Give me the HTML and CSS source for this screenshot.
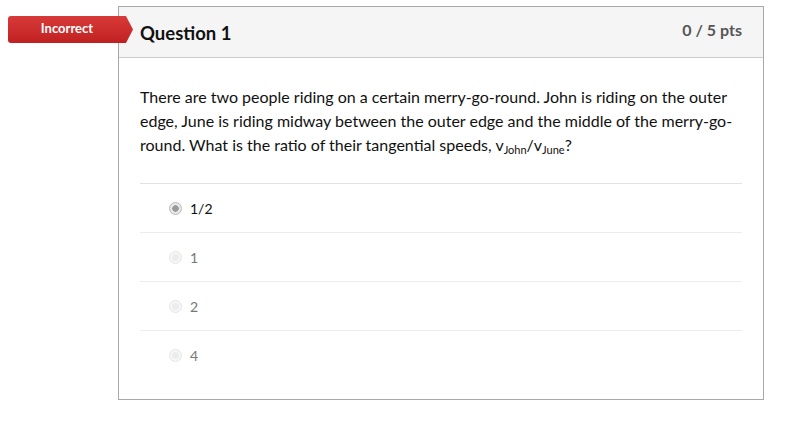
FILE: index.html
```html
<!DOCTYPE html>
<html>
<head>
<meta charset="utf-8">
<link rel="stylesheet" href="styles.css">
</head>
<body>
<div class="page">
  <div class="badge">Incorrect</div>
  <div class="card">
    <div class="header">
      <div class="title">Question 1</div>
      <div class="pts">0 / 5 pts</div>
    </div>
    <div class="body">
      <p class="text">There are two people riding on a certain merry-go-round. John is riding on the outer edge, June is riding midway between the outer edge and the middle of the merry-go-round. What is the ratio of their tangential speeds, v<sub>John</sub>/v<sub>June</sub>?</p>
      <div class="answers">
        <div class="answer selected"><span class="radio"></span><span class="label">1/2</span></div>
        <div class="answer"><span class="radio"></span><span class="label">1</span></div>
        <div class="answer"><span class="radio"></span><span class="label">2</span></div>
        <div class="answer"><span class="radio"></span><span class="label">4</span></div>
      </div>
    </div>
  </div>
</div>
</body>
</html>
```
FILE: styles.css
```css
html, body {
  margin: 0;
  padding: 0;
  background: #fff;
  font-family: Lato, "Open Sans", sans-serif;
}
.page {
  position: relative;
  padding: 6px 0 0 118px;
}
.card {
  width: 644px;
  height: 392px;
  border: 1px solid #a8a8a8;
  background: #fff;
}
.header {
  height: 50px;
  background: #f5f5f5;
  border-bottom: 1px solid #c7cdd1;
  display: flex;
  justify-content: space-between;
  align-items: flex-start;
  padding: 0 21px;
}
.title {
  font-weight: 700;
  font-size: 18.5px;
  color: #111;
  margin-top: 15px;
}
.pts {
  font-weight: 700;
  font-size: 16px;
  color: #555;
  margin-top: 13px;
}
.badge {
  position: absolute;
  left: 8px;
  top: 16px;
  width: 125px;
  height: 27px;
  background: linear-gradient(#d83a3a, #c02020);
  clip-path: polygon(0 0, 118px 0, 125px 50%, 118px 100%, 0 100%);
  border-radius: 3px 0 0 3px;
  color: #fff;
  font-weight: 700;
  font-size: 13px;
  line-height: 25px;
  padding-right: 7px;
  box-sizing: border-box;
  text-align: center;
}
.body {
  padding: 0 21px;
}
.text {
  margin: 27px 0 0;
  font-size: 16px;
  line-height: 24px;
  color: #111;
}
.text sub {
  font-size: 11px;
  vertical-align: -3px;
  line-height: 1;
}
.answers {
  margin-top: 26px;
  border-top: 1px solid #e2e2e2;
}
.answer {
  height: 48px;
  border-bottom: 1px solid #ececec;
  display: flex;
  align-items: center;
  padding-left: 29px;
  font-size: 14px;
  color: #777;
}
.answer:last-child {
  border-bottom: none;
}
.answer.selected {
  color: #111;
}
.radio {
  width: 11px;
  height: 11px;
  border-radius: 50%;
  border: 1px solid #e4e4e4;
  background: radial-gradient(circle, #ececec 0 3px, #f7f7f7 4px);
  margin-right: 8px;
}
.answer.selected .radio {
  border-color: #b8b8b8;
  background: radial-gradient(circle, #9a9a9a 0 3px, #e8e8e8 3.5px);
}
```
